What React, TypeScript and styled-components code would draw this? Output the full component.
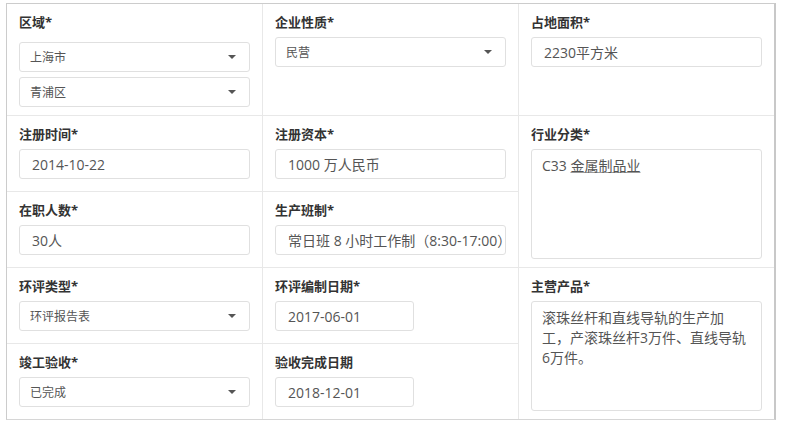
import React from 'react';
import styled, { createGlobalStyle } from 'styled-components';

const GlobalStyle = createGlobalStyle`
  body {
    margin: 0;
    background: #fff;
    font-family: 'Open Sans', 'Noto Sans CJK SC', sans-serif;
  }
  * {
    box-sizing: border-box;
  }
`;

const Sheet = styled.div`
  display: grid;
  grid-template-columns: 256px 256px 255px;
  grid-template-rows: 112px 76px 76px 76px 75px;
  width: 770px;
  margin: 3px 0 0 6px;
  border-top: 1px solid #ccc;
  border-left: 1px solid #ccc;
  border-right: 2px solid #c8c8c8;
  border-bottom: 1px solid #d6d6d6;
`;

const Cell = styled.div<{ $span?: number; $edge?: boolean; $last?: boolean }>`
  grid-row: span ${(p) => p.$span ?? 1};
  display: flex;
  flex-direction: column;
  min-width: 0;
  padding: 8px 12px;
  border-right: ${(p) => (p.$edge ? 'none' : '1px solid #e8e8e8')};
  border-bottom: ${(p) => (p.$last ? 'none' : '1px solid #e8e8e8')};
`;

const Label = styled.div`
  font-size: 13px;
  font-weight: 700;
  line-height: 20px;
  color: #333;
  margin-bottom: 5px;
`;

const TextInput = styled.input<{ $width?: number }>`
  display: block;
  width: ${(p) => (p.$width ? `${p.$width}px` : '100%')};
  height: 30px;
  margin: 0;
  padding: 0 0 0 12px;
  border: 1px solid #e0e0e0;
  border-radius: 3px;
  background: #fff;
  font-family: inherit;
  font-size: 14px;
  color: #555;
  outline: none;
`;

const SelectGroup = styled.div`
  display: flex;
  flex-direction: column;
  gap: 5px;
  margin-top: 5px;
`;

const Select = styled.div`
  display: flex;
  align-items: center;
  justify-content: space-between;
  height: 30px;
  padding: 0 13px 0 10px;
  border: 1px solid #e0e0e0;
  border-radius: 3px;
  font-size: 12px;
  color: #555;
`;

const Caret = styled.span`
  width: 0;
  height: 0;
  border-left: 4px solid transparent;
  border-right: 4px solid transparent;
  border-top: 4px solid #555;
`;

const TextArea = styled.div`
  flex: 1;
  padding: 6px 10px;
  border: 1px solid #e0e0e0;
  border-radius: 3px;
  font-size: 14px;
  line-height: 20px;
  color: #555;
  overflow: hidden;
`;

const Marked = styled.span`
  text-decoration: underline;
  text-decoration-color: #999;
`;

const Dropdown = ({ value }: { value: string }) => (
  <Select>
    <span>{value}</span>
    <Caret />
  </Select>
);

const App = () => (
  <>
    <GlobalStyle />
    <Sheet>
      <Cell>
        <Label>区域*</Label>
        <SelectGroup>
          <Dropdown value="上海市" />
          <Dropdown value="青浦区" />
        </SelectGroup>
      </Cell>
      <Cell>
        <Label>企业性质*</Label>
        <Dropdown value="民营" />
      </Cell>
      <Cell $edge>
        <Label>占地面积*</Label>
        <TextInput readOnly value="2230平方米" />
      </Cell>

      <Cell>
        <Label>注册时间*</Label>
        <TextInput readOnly value="2014-10-22" />
      </Cell>
      <Cell>
        <Label>注册资本*</Label>
        <TextInput readOnly value="1000 万人民币" />
      </Cell>
      <Cell $edge $span={2}>
        <Label>行业分类*</Label>
        <TextArea>
          C33 <Marked>金属制品业</Marked>
        </TextArea>
      </Cell>

      <Cell>
        <Label>在职人数*</Label>
        <TextInput readOnly value="30人" />
      </Cell>
      <Cell>
        <Label>生产班制*</Label>
        <TextInput readOnly value="常日班 8 小时工作制（8:30-17:00）" />
      </Cell>

      <Cell>
        <Label>环评类型*</Label>
        <Dropdown value="环评报告表" />
      </Cell>
      <Cell>
        <Label>环评编制日期*</Label>
        <TextInput readOnly $width={139} value="2017-06-01" />
      </Cell>
      <Cell $edge $last $span={2}>
        <Label>主营产品*</Label>
        <TextArea>滚珠丝杆和直线导轨的生产加工，产滚珠丝杆3万件、直线导轨6万件。</TextArea>
      </Cell>

      <Cell $last>
        <Label>竣工验收*</Label>
        <Dropdown value="已完成" />
      </Cell>
      <Cell $last>
        <Label>验收完成日期</Label>
        <TextInput readOnly $width={139} value="2018-12-01" />
      </Cell>
    </Sheet>
  </>
);

export default App;
